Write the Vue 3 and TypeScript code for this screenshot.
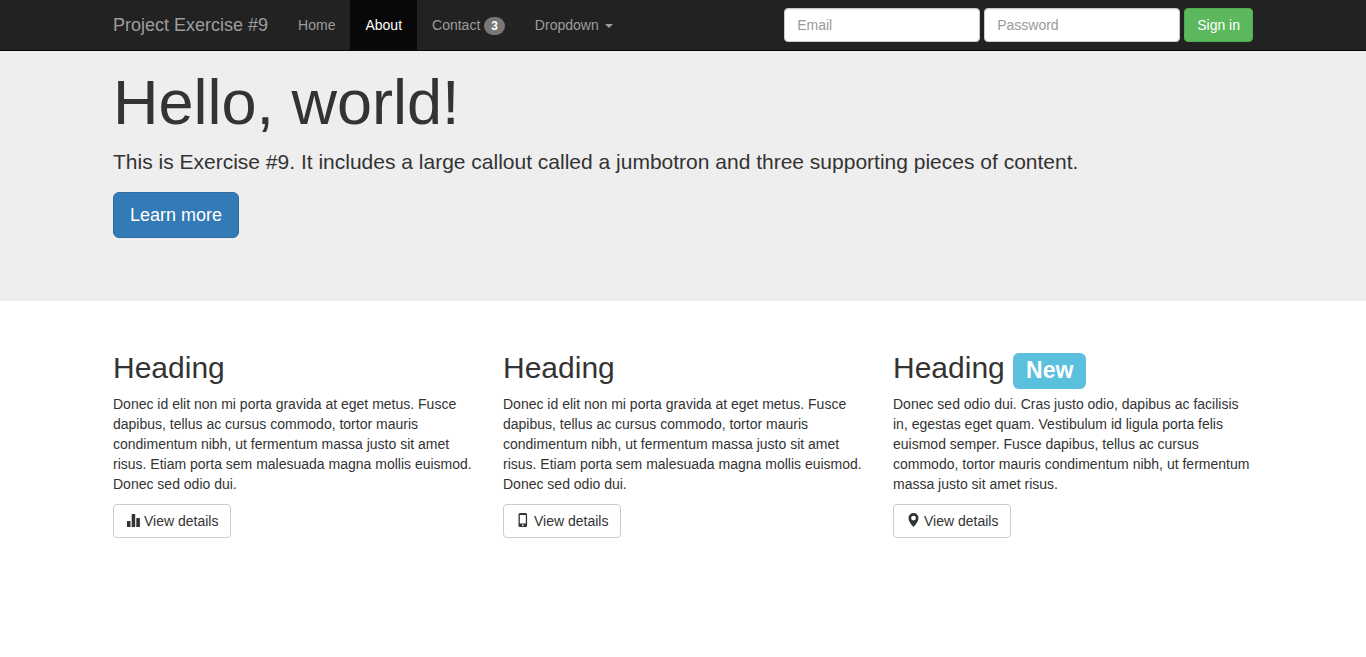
<script setup lang="ts">
import { ref } from 'vue'

type IconName = 'stats' | 'phone' | 'marker'

interface Feature {
  id: number
  title: string
  label?: string
  text: string
  icon: IconName
}

const email = ref('')
const password = ref('')

const loremFusce =
  'Donec id elit non mi porta gravida at eget metus. Fusce dapibus, tellus ac cursus commodo, tortor mauris condimentum nibh, ut fermentum massa justo sit amet risus. Etiam porta sem malesuada magna mollis euismod. Donec sed odio dui.'

const features: Feature[] = [
  { id: 1, title: 'Heading', text: loremFusce, icon: 'stats' },
  { id: 2, title: 'Heading', text: loremFusce, icon: 'phone' },
  {
    id: 3,
    title: 'Heading',
    label: 'New',
    text: 'Donec sed odio dui. Cras justo odio, dapibus ac facilisis in, egestas eget quam. Vestibulum id ligula porta felis euismod semper. Fusce dapibus, tellus ac cursus commodo, tortor mauris condimentum nibh, ut fermentum massa justo sit amet risus.',
    icon: 'marker',
  },
]
</script>

<template>
  <div class="page">
    <header class="navbar">
      <div class="container navbar-inner">
        <a class="brand" href="#">Project Exercise #9</a>
        <nav class="nav">
          <a class="nav-link" href="#">Home</a>
          <a class="nav-link active" href="#about" aria-current="page">About</a>
          <a class="nav-link" href="#contact">Contact <span class="badge">3</span></a>
          <a class="nav-link" href="#menu" aria-haspopup="true">Dropdown <span class="caret"></span></a>
        </nav>
        <form class="sign-in" @submit.prevent>
          <input v-model="email" class="field" type="email" placeholder="Email" aria-label="Email" />
          <input v-model="password" class="field" type="password" placeholder="Password" aria-label="Password" />
          <button class="btn btn-success" type="submit">Sign in</button>
        </form>
      </div>
    </header>

    <section class="jumbotron">
      <div class="container">
        <h1>Hello, world!</h1>
        <p class="lead">This is Exercise #9. It includes a large callout called a jumbotron and three supporting pieces of content.</p>
        <a class="btn btn-primary" href="#more">Learn more</a>
      </div>
    </section>

    <main class="container features">
      <article v-for="feature in features" :key="feature.id">
        <h2>{{ feature.title }} <span v-if="feature.label" class="label">{{ feature.label }}</span></h2>
        <p>{{ feature.text }}</p>
        <a class="btn btn-default" href="#details">
          <svg class="icon" viewBox="0 0 14 14" aria-hidden="true">
            <path
              v-if="feature.icon === 'stats'"
              d="M1 7.500q0-.5.5-.5h2.500q.5 0 .5.5V13H1zM5.700.5q0-.5.5-.5h2.500q.5 0 .5.5V13H5.700zM10.300 4.500q0-.5.5-.5h2.600q.5 0 .5.5V13h-3.600z"
            />
            <path
              v-else-if="feature.icon === 'phone'"
              fill-rule="evenodd"
              d="M4-1h5.600q1.500 0 1.500 1.500v11q0 1.500-1.500 1.500H4q-1.500 0-1.500-1.500V.5Q2.500-1 4-1zM3.800 1v8.500h6V1zM6 10.600V12h1.600v-1.400z"
            />
            <path
              v-else
              fill-rule="evenodd"
              d="M7.500-1a5 5 0 0 1 5 5C12.500 7 10.300 9.800 7.500 13 4.700 9.800 2.500 7 2.500 4a5 5 0 0 1 5-5zM7.500 1.700a2.400 2.400 0 1 0 0 4.800 2.400 2.400 0 0 0 0-4.800z"
            />
          </svg>
          View details
        </a>
      </article>
    </main>
  </div>
</template>

<style>
body {
  margin: 0;
  background: #fff;
}
</style>

<style scoped>
.page {
  font-family: "Liberation Sans", Arial, sans-serif;
  font-size: 14px;
  line-height: 20px;
  color: #333;
}

.page *,
.page *::before,
.page *::after {
  box-sizing: border-box;
}

a {
  text-decoration: none;
}

.container {
  width: 100%;
  max-width: 1170px;
  margin: 0 auto;
  padding: 0 15px;
}

.navbar {
  background: #222;
  border-bottom: 1px solid #080808;
}

.navbar-inner {
  display: flex;
  align-items: center;
}

.brand {
  padding: 15px 15px 15px 0;
  font-size: 18px;
  color: #9d9d9d;
}

.nav {
  display: flex;
}

.nav-link {
  padding: 15px;
  color: #9d9d9d;
}

.nav-link:hover {
  color: #fff;
}

.nav-link.active {
  color: #fff;
  background: #080808;
}

.badge {
  display: inline-block;
  min-width: 10px;
  padding: 3px 7px;
  font-size: 12px;
  font-weight: 700;
  line-height: 12px;
  color: #fff;
  text-align: center;
  vertical-align: middle;
  background: #777;
  border-radius: 10px;
}

.caret {
  display: inline-block;
  margin-left: 2px;
  vertical-align: middle;
  border-top: 4px solid;
  border-right: 4px solid transparent;
  border-left: 4px solid transparent;
}

.sign-in {
  display: flex;
  gap: 4px;
  margin-left: auto;
}

.field {
  width: 196px;
  height: 34px;
  padding: 6px 12px;
  font: inherit;
  color: #555;
  background: #fff;
  border: 1px solid #ccc;
  border-radius: 4px;
  box-shadow: inset 0 1px 1px rgba(0, 0, 0, 0.075);
}

.field::placeholder {
  color: #999;
  opacity: 1;
}

.btn {
  display: inline-flex;
  align-items: center;
  gap: 4px;
  padding: 6px 12px;
  font: inherit;
  white-space: nowrap;
  cursor: pointer;
  border: 1px solid transparent;
  border-radius: 4px;
}

.btn-success {
  color: #fff;
  background: #5cb85c;
  border-color: #4cae4c;
}

.btn-primary {
  padding: 10px 16px;
  font-size: 18px;
  line-height: 24px;
  color: #fff;
  background: #337ab7;
  border-color: #2e6da4;
  border-radius: 6px;
}

.btn-default {
  color: #333;
  background: #fff;
  border-color: #ccc;
}

.icon {
  width: 14px;
  height: 14px;
  overflow: visible;
  fill: currentColor;
}

.jumbotron {
  padding: 17px 0 63px;
  background: #eee;
}

.jumbotron .container {
  display: flex;
  flex-direction: column;
  align-items: flex-start;
}

h1 {
  margin: 0 0 10px;
  font-size: 63px;
  font-weight: 500;
  line-height: 69px;
}

.lead {
  margin: 0 0 15px;
  font-size: 21px;
  line-height: 30px;
}

.features {
  display: grid;
  grid-template-columns: repeat(3, 1fr);
  gap: 30px;
  padding-top: 50px;
  padding-bottom: 30px;
}

h2 {
  margin: 0 0 10px;
  font-size: 30px;
  font-weight: 500;
  line-height: 33px;
}

.features p {
  margin: 0 0 10px;
}

.label {
  padding: 4px 13px 6px;
  font-size: 23px;
  font-weight: 700;
  line-height: 23px;
  color: #fff;
  background: #5bc0de;
  border-radius: 6px;
}
</style>
